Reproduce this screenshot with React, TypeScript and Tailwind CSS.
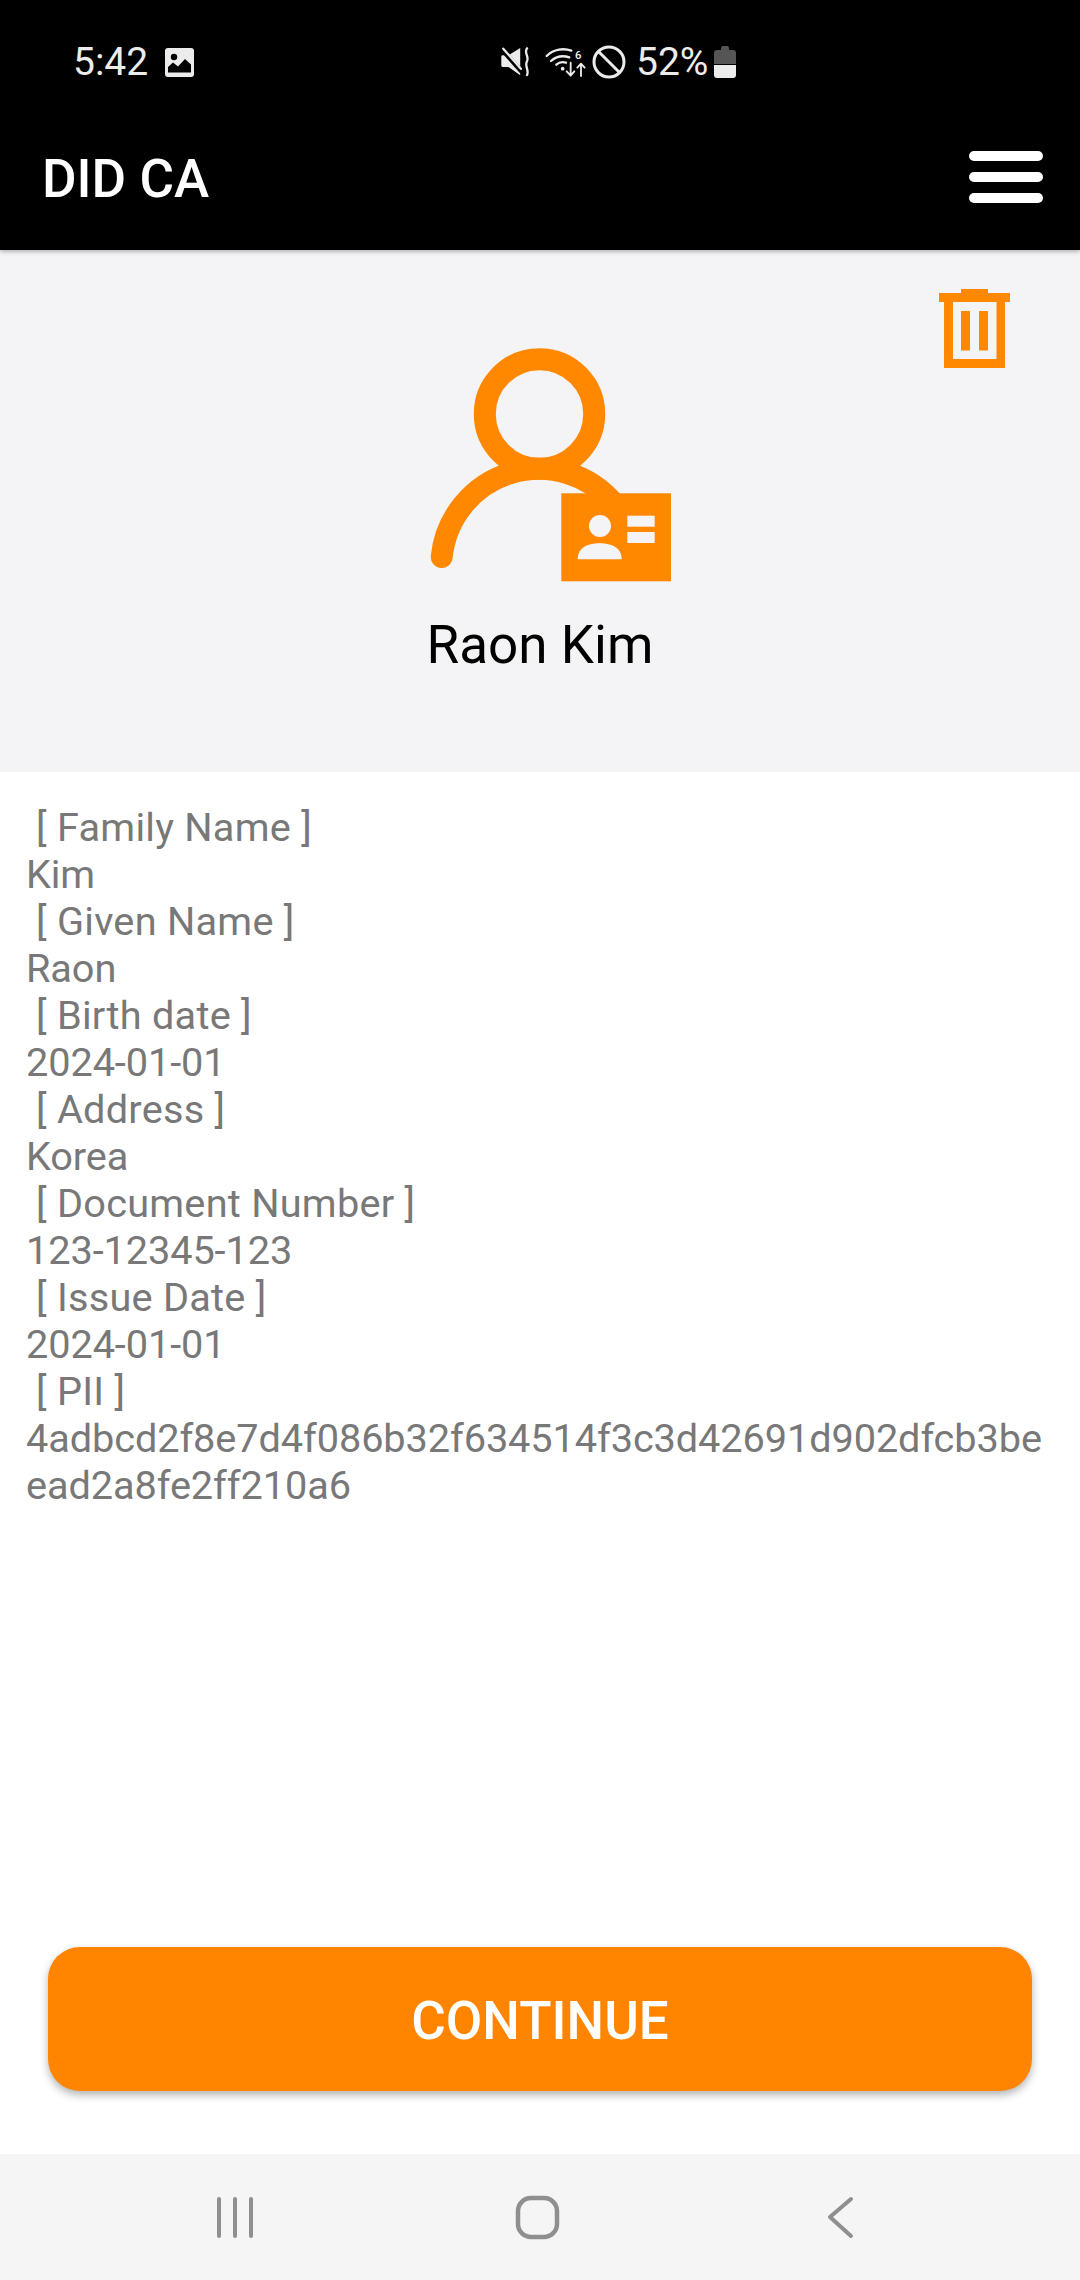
const ORANGE = "#ff8800";
const ICON_LIGHT = "#ececec";

function GalleryIcon() {
  return (
    <svg width="29" height="29" viewBox="0 0 29 29" className="ml-[19px]">
      <rect x="0" y="0" width="29" height="29" rx="3" fill={ICON_LIGHT} />
      <circle cx="9" cy="9" r="3.2" fill="#000" />
      <path d="M3 24.5V19L8 14.5L13 18.5L20 11L26 16.5V24.5Z" fill="#000" />
    </svg>
  );
}

function MuteIcon() {
  return (
    <svg width="30" height="30" viewBox="58 55 92 92">
      <path d="M62 84Q62 80 66 80H84L120 58V142L84 116H66Q62 116 62 112Z" fill={ICON_LIGHT} />
      <path d="M60 58L126 132" stroke="#000" strokeWidth="14" />
      <path d="M68 60L122 122" stroke={ICON_LIGHT} strokeWidth="7" strokeLinecap="round" />
      <path d="M141 59C130 72 148 84 141 98C132 112 148 124 141 141" fill="none" stroke={ICON_LIGHT} strokeWidth="7" strokeLinecap="round" />
    </svg>
  );
}

function WifiIcon() {
  return (
    <svg width="41" height="31" viewBox="193 55 123 93" className="ml-[15px]">
      <g fill="none" stroke={ICON_LIGHT} strokeWidth="7" strokeLinecap="round">
        <path d="M198 82C220 60 250 58 272 66" />
        <path d="M211 97C228 82 248 80 266 86" />
        <path d="M227 108C236 100 246 99 256 102" />
      </g>
      <circle cx="246" cy="120" r="5.5" fill={ICON_LIGHT} />
      <g fill="none" stroke={ICON_LIGHT} strokeWidth="5.5" strokeLinecap="round" strokeLinejoin="round">
        <path d="M270 102V140M258 128L270 141L281 128" />
        <path d="M301 142V106M290 117L301 105L312 117" />
      </g>
      <text x="293" y="90" textAnchor="middle" fontSize="34" fontWeight="500" fontFamily="Roboto, sans-serif" fill={ICON_LIGHT}>6</text>
    </svg>
  );
}

function BlockIcon() {
  return (
    <svg width="34" height="34" viewBox="0 0 34 34" className="ml-[6px]">
      <circle cx="17" cy="17" r="15" fill="none" stroke={ICON_LIGHT} strokeWidth="3" />
      <path d="M7 7L27 27" stroke={ICON_LIGHT} strokeWidth="3" />
    </svg>
  );
}

function BatteryIcon() {
  return (
    <svg width="22" height="32" viewBox="0 0 22 32" className="ml-[6px]">
      <path d="M7 2Q7 0 9 0H13Q15 0 15 2V4H19Q22 4 22 7V18H0V7Q0 4 3 4H7Z" fill="#555555" />
      <path d="M0 19H22V29Q22 32 19 32H3Q0 32 0 29Z" fill={ICON_LIGHT} />
    </svg>
  );
}

function StatusBar() {
  return (
    <div className="flex h-[124px] items-center pl-[73px] text-[39px] leading-none text-[#ececec]">
      <span className="w-[73px]">5:42</span>
      <GalleryIcon />
      <div className="ml-[306px] flex items-center">
        <MuteIcon />
        <WifiIcon />
        <BlockIcon />
        <span className="ml-[10px]">52%</span>
        <BatteryIcon />
      </div>
    </div>
  );
}

function AppBar() {
  return (
    <div className="flex h-[126px] items-start justify-between bg-black pl-[42px] pr-[37px] shadow-[0_2px_4px_rgba(0,0,0,0.25)]">
      <span className="mt-[25px] text-[53px] font-medium leading-[60px] text-white">DID CA</span>
      <div className="mt-[27px] flex w-[74px] flex-col gap-[11px]">
        <div className="h-[10px] rounded-full bg-white" />
        <div className="h-[10px] rounded-full bg-white" />
        <div className="h-[10px] rounded-full bg-white" />
      </div>
    </div>
  );
}

function TrashIcon() {
  return (
    <svg width="71" height="79" viewBox="939 290 71 79" className="absolute right-[70px] top-[39px]">
      <path d="M961 290H988V294H1010V303H1005V369H944V303H939V294H961Z" fill={ORANGE} />
      <rect x="953" y="303" width="43.5" height="57" fill="#f4f4f6" />
      <rect x="961" y="312" width="9" height="39.5" fill={ORANGE} />
      <rect x="979" y="312" width="9" height="39.5" fill={ORANGE} />
    </svg>
  );
}

function CredentialIcon() {
  return (
    <svg width="270" height="250" viewBox="405 340 270 250">
      <circle cx="539.5" cy="414" r="54.7" fill="none" stroke={ORANGE} strokeWidth="22" />
      <path d="M441.7 557A97.8 97.8 0 0 1 615 505" fill="none" stroke={ORANGE} strokeWidth="22" strokeLinecap="round" />
      <rect x="561.3" y="493.3" width="109.7" height="88" fill={ORANGE} />
      <circle cx="600" cy="526" r="11" fill="#f4f4f6" />
      <path d="M577.7 559.3C577.7 548 587 543.3 599.7 543.3C612 543.3 621.7 548 621.7 559.3Z" fill="#f4f4f6" />
      <rect x="627.3" y="515.7" width="27.4" height="11" fill="#f4f4f6" />
      <rect x="627.3" y="532" width="27.4" height="11" fill="#f4f4f6" />
    </svg>
  );
}

const FIELDS = [
  ["Family Name", "Kim"],
  ["Given Name", "Raon"],
  ["Birth date", "2024-01-01"],
  ["Address", "Korea"],
  ["Document Number", "123-12345-123"],
  ["Issue Date", "2024-01-01"],
  ["PII", "4adbcd2f8e7d4f086b32f634514f3c3d42691d902dfcb3beead2a8fe2ff210a6"],
];

function NavBar() {
  return (
    <div className="flex h-[126px] items-center bg-[#f5f5f5]">
      <svg width="1080" height="126" viewBox="0 2154 1080 126">
        <g fill="none" stroke="#8f8f8f" strokeWidth="4" strokeLinecap="round" strokeLinejoin="round">
          <path d="M219 2199V2236M235 2199V2236M251 2199V2236" />
          <rect x="518" y="2198" width="39" height="39" rx="13" strokeWidth="4.5" />
          <path d="M851 2199L830 2217L851 2236" />
        </g>
      </svg>
    </div>
  );
}

export default function App() {
  return (
    <div className="flex h-[2280px] w-[1080px] flex-col bg-white font-['Roboto',sans-serif]">
      <div className="relative z-10 bg-black">
        <StatusBar />
        <AppBar />
      </div>

      <div className="relative flex h-[522px] flex-col items-center bg-[#f4f4f6] pt-[90px]">
        <TrashIcon />
        <CredentialIcon />
        <span className="mt-[25px] text-[53px] leading-[60px] text-black">Raon Kim</span>
      </div>

      <div className="flex-1 px-[26px] pt-[32px] text-[39.7px] leading-[47px] text-[#787878]">
        {FIELDS.map(([label, value]) => (
          <div key={label}>
            <div className="whitespace-pre tracking-[0.25px]">{` [ ${label} ]`}</div>
            <div className="break-all tracking-[-0.09px]">{value}</div>
          </div>
        ))}
      </div>

      <div className="px-[48px] pb-[63px]">
        <button
          type="button"
          className="h-[144px] w-full rounded-[32px] bg-[#ff8400] pt-[6px] text-[53px] font-medium text-white shadow-[0_4px_8px_rgba(0,0,0,0.3)]"
        >
          CONTINUE
        </button>
      </div>

      <NavBar />
    </div>
  );
}
